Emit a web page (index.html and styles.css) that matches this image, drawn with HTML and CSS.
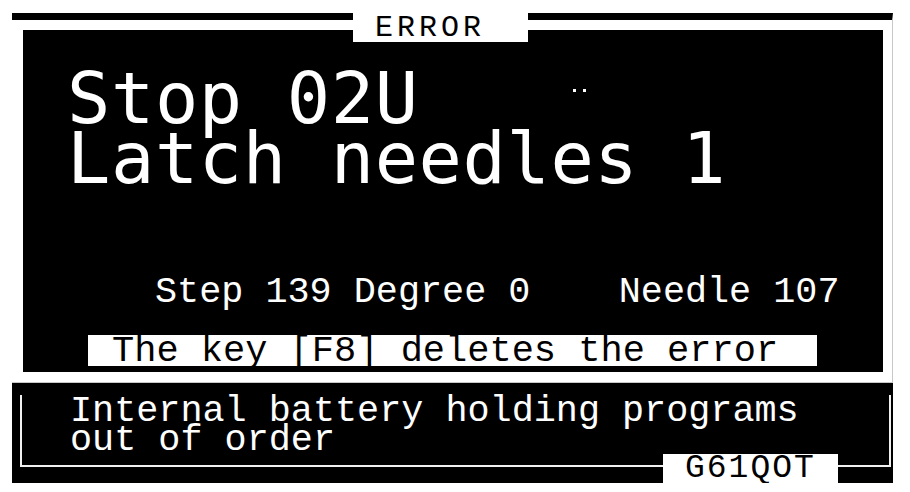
FILE: index.html
```html
<!DOCTYPE html>
<html lang="en">
<head>
<meta charset="utf-8">
<title>ERROR</title>
<link rel="stylesheet" href="styles.css">
</head>
<body>
<div class="screen">
  <section class="top">
    <div class="error-label">ERROR</div>
    <div class="inner">
      <div class="big">
        <div class="big-line">Stop 02U</div>
        <div class="big-line">Latch needles 1</div>
      </div>
      <span class="dots"><i></i><i></i></span>
      <div class="info">Step 139 Degree 0    Needle 107</div>
      <div class="keybar">The key [F8] deletes the error</div>
    </div>
  </section>
  <section class="bottom">
    <div class="frame">
      <div class="msg">Internal battery holding programs</div>
      <div class="msg">out of order</div>
    </div>
    <div class="code-label">G61QOT</div>
  </section>
</div>
</body>
</html>
```

FILE: styles.css
```css
html, body {
  margin: 0;
  padding: 0;
  background: #ffffff;
}

.screen {
  margin: 13px 0 0 12px;
  width: 881px;
  font-family: "Liberation Mono", "DejaVu Sans Mono", monospace;
  color: #ffffff;
}

.top {
  position: relative;
  box-sizing: border-box;
  border-top: 7px solid #000;
  border-right: 1px solid #c8c8c8;
  padding: 10px 9px 10px 11px;
}

.error-label {
  position: absolute;
  left: 341px;
  top: -7px;
  z-index: 2;
  box-sizing: border-box;
  width: 175px;
  height: 29px;
  padding: 1px 0 0 22px;
  background: #fff;
  color: #000;
  font-size: 30px;
  line-height: 29px;
  letter-spacing: 4px;
  white-space: nowrap;
}

.inner {
  position: relative;
  display: flex;
  flex-direction: column;
  box-sizing: border-box;
  height: 342px;
  padding: 38px 0 6px 0;
  background: #000;
}

.big {
  padding-left: 44px;
  font-family: "DejaVu Sans Mono", monospace;
  font-size: 72px;
  line-height: 60px;
  letter-spacing: 0.6px;
}

.big-line {
  height: 60px;
  white-space: pre;
}

.dots {
  position: absolute;
  left: 550px;
  top: 59px;
  display: flex;
  gap: 7px;
}

.dots i {
  display: block;
  width: 3px;
  height: 3px;
  background: #fff;
}

.info {
  margin: 90px 0 0 132px;
  font-size: 36.8px;
  line-height: 29px;
  height: 29px;
  white-space: pre;
}

.keybar {
  box-sizing: border-box;
  margin: 28px 0 0 65px;
  width: 729px;
  height: 31px;
  padding: 2px 0 0 24px;
  background: #fff;
  color: #000;
  font-size: 37px;
  line-height: 29px;
  white-space: pre;
}

.bottom {
  position: relative;
  box-sizing: border-box;
  height: 101px;
  padding: 12px 2px 0 8px;
  background: #000;
  border-top: 1px solid #c8c8c8;
}

.frame {
  box-sizing: border-box;
  height: 72px;
  padding: 2px 0 0 48px;
  border: 2px solid #f0f0f0;
  border-top: none;
}

.msg {
  font-size: 36.8px;
  line-height: 29px;
  height: 29px;
  white-space: pre;
}

.code-label {
  position: absolute;
  left: 651px;
  top: 71px;
  box-sizing: border-box;
  width: 175px;
  height: 30px;
  padding-left: 22px;
  background: #fff;
  color: #000;
  font-size: 33px;
  line-height: 30px;
  letter-spacing: 2px;
  white-space: nowrap;
}
```
